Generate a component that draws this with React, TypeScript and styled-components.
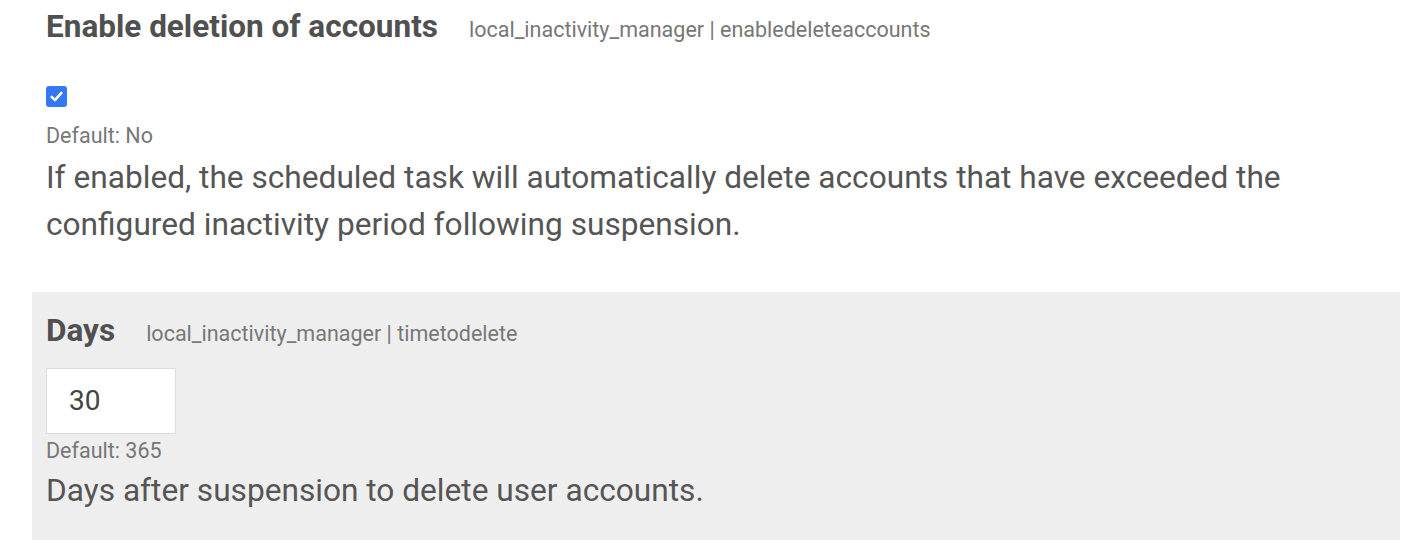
import React from "react";
import styled, { createGlobalStyle } from "styled-components";

const GlobalStyle = createGlobalStyle`
  html, body { margin: 0; padding: 0; background: #ffffff; }
  body { font-family: Roboto, "Noto Sans", "Liberation Sans", sans-serif; color: #555555; }
`;

const Page = styled.div`
  width: 1368px;
  margin-left: 32px;
`;

const Setting = styled.section<{ $shaded?: boolean }>`
  background: ${(p) => (p.$shaded ? "#eeeeee" : "transparent")};
  padding: ${(p) => (p.$shaded ? "15px 14px 40px" : "3px 14px 0")};
  margin-top: ${(p) => (p.$shaded ? "44px" : "0")};
`;

const TitleRow = styled.div`
  display: flex;
  align-items: baseline;
  gap: 31px;
  height: 47px;
`;

const Title = styled.h3`
  margin: 0;
  font-size: 31.5px;
  line-height: 47px;
  font-weight: 700;
  color: #505050;
`;

const Key = styled.span`
  font-size: 21.5px;
  line-height: 32px;
  color: #777777;
`;

const CheckRow = styled.div`
  margin-top: 36px;
  margin-bottom: 13px;
  height: 21px;
  display: flex;
`;

const CheckBox = styled.span`
  width: 21px;
  height: 21px;
  border-radius: 3px;
  background: #3478f6;
  display: inline-flex;
  align-items: center;
  justify-content: center;
`;

const NumberInput = styled.div`
  margin-top: 14px;
  margin-bottom: 1px;
  width: 130px;
  height: 66px;
  box-sizing: border-box;
  background: #ffffff;
  border: 1px solid #dcdcdc;
  padding-left: 22px;
  font-size: 28px;
  line-height: 64px;
  color: #444444;
`;

const DefaultText = styled.div<{ $gap?: number }>`
  font-size: 21.5px;
  line-height: 32px;
  color: #777777;
  margin-bottom: ${(p) => p.$gap ?? 0}px;
`;

const Description = styled.p`
  margin: 0;
  font-size: 31.65px;
  line-height: 47px;
  color: #555555;
`;

export default function App() {
  return (
    <>
      <GlobalStyle />
      <Page>
        <Setting>
          <TitleRow>
            <Title>Enable deletion of accounts</Title>
            <Key>local_inactivity_manager | enabledeleteaccounts</Key>
          </TitleRow>
          <CheckRow>
            <CheckBox role="checkbox" aria-checked="true">
              <svg width="15" height="15" viewBox="0 0 14 14">
                <path d="M2.5 7.4 L5.6 10.4 L11.6 3.6" fill="none" stroke="#ffffff" strokeWidth="2.4" strokeLinecap="round" strokeLinejoin="round" />
              </svg>
            </CheckBox>
          </CheckRow>
          <DefaultText $gap={2}>Default: No</DefaultText>
          <Description>
            If enabled, the scheduled task will automatically delete accounts that have exceeded the
            <br />
            configured inactivity period following suspension.
          </Description>
        </Setting>
        <Setting $shaded>
          <TitleRow>
            <Title>Days</Title>
            <Key>local_inactivity_manager | timetodelete</Key>
          </TitleRow>
          <NumberInput>30</NumberInput>
          <DefaultText>Default: 365</DefaultText>
          <Description>Days after suspension to delete user accounts.</Description>
        </Setting>
      </Page>
    </>
  );
}
